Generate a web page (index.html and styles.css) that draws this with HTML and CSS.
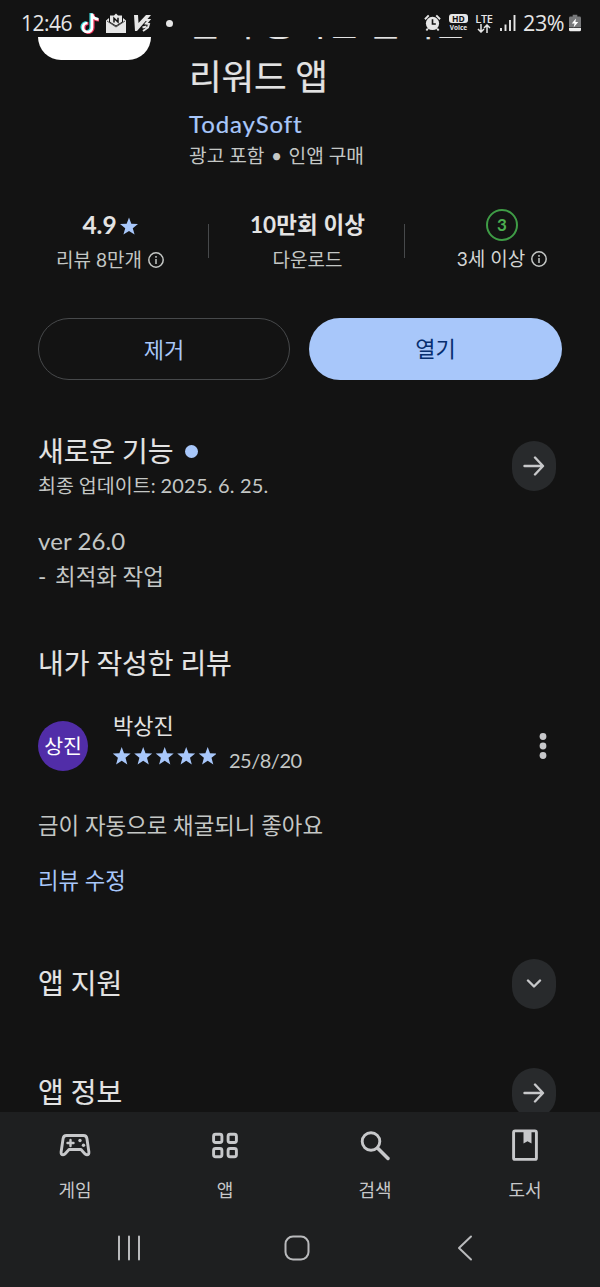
FILE: index.html
```html
<!DOCTYPE html>
<html lang="ko">
<head>
<meta charset="utf-8">
<title>TodaySoft</title>
<link rel="stylesheet" href="styles.css">
</head>
<body>
<div class="screen">
  <header class="status">
    <span class="clock">12:46</span>
    <svg class="tiktok" width="20" height="22" viewBox="0 0 20 22" fill="none" stroke-width="3.2"><path d="M11 1v14a4.500 4.500 0 1 1-4.500-4.500M11 2c.5 3.500 3 5 6.500 5" stroke="#35d6da"/><path d="M13 2v14a4.500 4.500 0 1 1-4.500-4.500M13 3c.5 3.500 3 5 6 5" stroke="#ee3158"/><path d="M12 1.500v14A4.500 4.500 0 1 1 7.500 11M12 2c.5 3.500 3 5 6.500 5.300" stroke="#fff" stroke-width="2.700"/></svg>
    <svg class="mail" width="20" height="20" viewBox="0 0 20 20"><path d="M0 7.500 3 5v4l7 4.500L17 9V5l3 2.500V20H0z" fill="#e6e6e6"/><path d="M4 2.500h4L10 .5l2 2h4v6.200l-6 3.800-6-3.800z" fill="#e6e6e6"/><path d="M8 9.500V5.200l4 3.800V4.700" fill="none" stroke="#131313" stroke-width="1.500"/><path d="m1 8 9 6 9-6" fill="none" stroke="#131313" stroke-width=".7"/></svg>
    <svg class="v3" width="18" height="18" viewBox="0 0 18 18"><path d="M0 1h4l.5 8L12 1h5L3 17H1z" fill="#e6e6e6"/><path d="M9.500 6h5.500l-3 3.500 3 .5-1 3.500-5 3.500M8.500 13.500l4-1" fill="none" stroke="#e6e6e6" stroke-width="2"/></svg>
    <span class="more-dot"></span>
    <span class="spring"></span>
    <svg class="alarm" width="17" height="18" viewBox="0 0 18 18"><circle cx="9" cy="9.500" r="7" fill="#e6e6e6"/><path d="M1 5 5 1M13 1l4 4M4 15l-1.500 2M14 15l1.500 2" stroke="#e6e6e6" stroke-width="2"/><path d="M9 5v5h3.500" fill="none" stroke="#131313" stroke-width="1.700"/></svg>
    <span class="hd"><b>HD</b><i>Voice</i></span>
    <span class="lte"><b>LTE</b><svg width="14" height="9" viewBox="0 0 14 9" fill="none" stroke="#e6e6e6" stroke-width="1.500"><path d="M4 0v8M1 5l3 3 3-3M10 9V1M7 4l3-3 3 3"/></svg></span>
    <svg class="signal" width="16" height="17" viewBox="0 0 16 17" stroke="#e6e6e6" stroke-width="1.900"><path d="M1 13v3M5.500 9.500V16M10 5v11M14.500 0v16"/></svg>
    <span class="percent">23%</span>
    <svg class="battery" width="12" height="18" viewBox="0 0 13 18"><path d="M4 0h5v2h2.500q1.500 0 1.500 1.500V14H0V3.500Q0 2 1.500 2H4z" fill="#77787a"/><path d="M0 14.500h13v2q0 1.500-1.500 1.500h-10Q0 18 0 16.500z" fill="#eee"/><path d="M7.500 4 3 9.500h3L5 14l5-6H7z" fill="#fff"/></svg>
  </header>

  <main class="content">
    <section class="hero">
      <div class="app-icon"></div>
      <div class="hero-text">
        <h1>금이 통하는 돈버는<br>리워드 앱</h1>
        <a class="developer">TodaySoft</a>
        <p class="notice">광고 포함 <span class="bullet">•</span> 인앱 구매</p>
      </div>
    </section>

    <section class="stats">
      <div class="stat">
        <div class="stat-value">4.9<svg class="star-lg" width="18" height="18" viewBox="1.500 1.500 21 20"><path d="m12 1.500 2.700 7.400 7.800.3-6.100 4.900 2.100 7.400-6.500-4.300-6.500 4.300 2.100-7.400L1.500 9.200l7.800-.3z" fill="#a8c7fa"/></svg></div>
        <div class="stat-label">리뷰 8만개<svg class="info" viewBox="0 0 16 16"><circle cx="8" cy="8" r="7.200"/><path d="M8 7v5M8 4v1.700"/></svg></div>
      </div>
      <div class="stat middle">
        <div class="stat-value downloads">10만회 이상</div>
        <div class="stat-label">다운로드</div>
      </div>
      <div class="stat rating">
        <div class="stat-value"><span class="age">3</span></div>
        <div class="stat-label">3세 이상<svg class="info" viewBox="0 0 16 16"><circle cx="8" cy="8" r="7.200"/><path d="M8 7v5M8 4v1.700"/></svg></div>
      </div>
    </section>

    <div class="actions">
      <button class="btn outline">제거</button>
      <button class="btn filled">열기</button>
    </div>

    <section class="whats-new">
      <div class="row">
        <div>
          <h2>새로운 기능<span class="dot"></span></h2>
          <p class="updated">최종 업데이트: <span class="date-num">2025. 6. 25.</span></p>
        </div>
        <span class="round"><svg width="22" height="20" viewBox="0 0 22 20"><path d="M1.500 10h18M12 1.500l8 8.500-8 8.500"/></svg></span>
      </div>
      <p class="notes"><span class="version">ver 26.0</span><br><span class="dash">-</span> 최적화 작업</p>
    </section>

    <section class="my-review">
      <h2>내가 작성한 리뷰</h2>
      <div class="reviewer">
        <span class="avatar">상진</span>
        <div class="who">
          <div class="name">박상진</div>
          <div class="score">
            <svg width="103" height="18" viewBox="0 0 103 18" fill="#a8c7fa"><defs><path id="star" d="m8.700 0 2.300 6.300 6.700.3-5.200 4.200 1.800 6.700-5.600-3.800-5.600 3.800 1.800-6.700L-.3 6.600l6.700-.3z"/></defs><use href="#star"/><use href="#star" x="21.500"/><use href="#star" x="43"/><use href="#star" x="64.500"/><use href="#star" x="86"/></svg>
            <span class="when">25/8/20</span>
          </div>
        </div>
        <svg class="kebab" width="8" height="28" viewBox="0 0 8 28" fill="#c7c8ca"><circle cx="4" cy="4.500" r="3.400"/><circle cx="4" cy="14" r="3.400"/><circle cx="4" cy="23.500" r="3.400"/></svg>
      </div>
      <p class="review-text">금이 자동으로 채굴되니 좋아요</p>
      <a class="edit">리뷰 수정</a>
    </section>

    <section class="row link-row support">
      <h2>앱 지원</h2>
      <span class="round"><svg width="16" height="10" viewBox="0 0 16 10"><path d="m2 1.500 6 6 6-6"/></svg></span>
    </section>
    <section class="row link-row">
      <h2>앱 정보</h2>
      <span class="round"><svg width="22" height="20" viewBox="0 0 22 20"><path d="M1.500 10h18M12 1.500l8 8.500-8 8.500"/></svg></span>
    </section>
  </main>

  <footer class="bottom">
    <nav class="tabs">
      <a class="tab"><svg width="34" height="34" viewBox="0 0 34 34"><path d="M8.500 7.500h17q3 0 3.400 3l2 13.500q.3 2.700-2 2.700-1.300 0-2.300-1.200L23 21.500H11l-3.600 4q-1 1.200-2.300 1.200-2.300 0-2-2.700l2-13.500q.4-3 3.400-3z"/><path d="M12.500 12v6M9.500 15h6" stroke-width="2.400"/><g fill="#c7c8ca" stroke="none"><circle cx="22" cy="12.500" r="1.700"/><circle cx="25.500" cy="17.300" r="1.700"/></g></svg><span>게임</span></a>
      <a class="tab"><svg width="34" height="34" viewBox="0 0 34 34"><rect x="5.600" y="6.200" width="8.300" height="8.300" rx="2"/><rect x="20.100" y="6.200" width="8.300" height="8.300" rx="2"/><rect x="5.600" y="20.500" width="8.300" height="8.300" rx="2"/><rect x="20.100" y="20.500" width="8.300" height="8.300" rx="2"/></svg><span>앱</span></a>
      <a class="tab"><svg width="34" height="34" viewBox="0 0 34 34"><circle cx="13" cy="13.500" r="8.800"/><path d="m19.500 20 10.500 10.500" stroke-width="3.500"/></svg><span>검색</span></a>
      <a class="tab"><svg width="34" height="34" viewBox="0 0 34 34"><rect x="5.600" y="2.900" width="22.800" height="28.500" rx="1.500"/><path d="M15.500 2.500h8v13l-4-2.200-4 2.200z" fill="#c7c8ca" stroke="none"/></svg><span>도서</span></a>
    </nav>
    <div class="system">
      <svg width="24" height="26" viewBox="0 0 24 26"><path d="M2 1.500v23M12 1.500v23M22 1.500v23"/></svg>
      <svg width="26" height="26" viewBox="0 0 26 26"><rect x="1.500" y="1.500" width="23" height="23" rx="7.500"/></svg>
      <svg width="16" height="26" viewBox="0 0 16 26"><path d="M14 1.500 2 13l12 11.500"/></svg>
    </div>
  </footer>
</div>
</body>
</html>
```
FILE: styles.css
```css
* { box-sizing: border-box; margin: 0; padding: 0; }

body {
  background: #131313;
  color: #e3e3e3;
  font-family: Lato, "Noto Sans CJK KR", sans-serif;
  overflow: hidden;
}

svg { display: block; flex: none; }

.screen {
  width: 600px;
  height: 1287px;
  display: flex;
  flex-direction: column;
}

.status {
  height: 37px;
  flex: none;
  display: flex;
  align-items: center;
  padding: 9px 19px 0 21px;
  color: #e6e6e6;
  font-family: "Open Sans", sans-serif;
}
.clock { font-size: 21px; letter-spacing: -0.5px; line-height: 24px; width: 59px; white-space: nowrap; }
.tiktok { margin-right: 6px; }
.mail { margin-right: 8px; }
.v3 { margin-right: 14px; }
.more-dot { width: 7px; height: 7px; border-radius: 50%; background: #e6e6e6; }
.spring { flex: 1; }
.alarm { margin-right: 8px; }
.hd { width: 19px; margin-right: 6px; display: flex; flex-direction: column; align-items: center; }
.hd b { width: 19px; height: 9px; border-radius: 3px; background: #e6e6e6; color: #131313; font-size: 8.5px; line-height: 9px; text-align: center; }
.hd i { font-style: normal; font-weight: 700; font-size: 6.5px; line-height: 8px; margin-top: 1px; }
.lte { width: 20px; margin-right: 6px; display: flex; flex-direction: column; align-items: center; }
.lte b { font-size: 11px; font-weight: 600; line-height: 10px; letter-spacing: -0.3px; }
.signal { margin-right: 7px; }
.percent { font-size: 21.5px; letter-spacing: -0.4px; line-height: 24px; width: 46px; white-space: nowrap; }

.content { flex: 1; min-height: 0; overflow: hidden; }

.hero { display: flex; gap: 38px; padding-left: 38px; height: 158px; }
.app-icon { width: 113px; height: 23px; background: #fff; border-radius: 0 0 24px 24px; }
.hero-text { margin-top: -41px; white-space: nowrap; }
h1 { font-size: 35.5px; font-weight: 400; line-height: 54px; letter-spacing: -0.2px; -webkit-text-stroke: 0.2px #e3e3e3; }
.developer { display: block; color: #a8c7fa; font-size: 24px; line-height: 30px; margin-top: 5px; letter-spacing: 0.9px; -webkit-text-stroke: 0.2px #a8c7fa; }
.notice { font-size: 19.2px; line-height: 30px; color: #c4c7c5; margin-top: 2px; }
.bullet { margin: 0 1.5px; }

.stats { display: grid; grid-template-columns: 196px 196px 196px; padding: 14px 0 0 12px; height: 99px; }
.stat { position: relative; text-align: center; }
.stat + .stat::before { content: ""; position: absolute; left: 0; top: 15px; width: 1px; height: 34px; background: #47494b; }
.stat-value { height: 30px; display: flex; justify-content: center; align-items: center; font-size: 24.5px; font-weight: 700; }
.downloads { font-size: 22.5px; font-weight: 700; letter-spacing: 0.1px; padding-bottom: 2px; }
.middle { padding-left: 3px; }
.star-lg { margin: 3px 0 0 3px; }
.stat-label { height: 30px; margin-top: 4px; display: flex; justify-content: center; align-items: center; gap: 6px; font-size: 19px; color: #c4c7c5; white-space: nowrap; }
.info { width: 16px; height: 16px; margin-top: 3px; fill: none; stroke: #c4c7c5; stroke-width: 1.5; }
.age { width: 32px; height: 32px; margin-top: 2px; border: 2.5px solid #3f9c46; border-radius: 50%; color: #4caf50; font-size: 17px; line-height: 27px; text-align: center; }
.rating .stat-label { margin-top: 3px; color: #d3d5d4; }

.actions { display: flex; gap: 19px; padding-left: 38px; margin-top: 24px; }
.btn { width: 253px; height: 62px; border-radius: 31px; border: 0; font: 22px/62px Lato, "Noto Sans CJK KR", sans-serif; }
.outline { width: 252px; background: none; border: 1.5px solid #47494b; color: #a8c7fa; line-height: 57px; }
.filled { background: #a8c7fa; color: #062e6f; }

.row { display: flex; justify-content: space-between; padding-right: 44px; }
.whats-new { padding-left: 38px; margin-top: 54px; }
h2 { font-size: 28px; font-weight: 400; line-height: 34px; letter-spacing: -0.1px; display: flex; align-items: center; white-space: pre; -webkit-text-stroke: 0.1px #e3e3e3; }
.dot { width: 13px; height: 13px; margin-left: 12px; border-radius: 50%; background: #a8c7fa; }
.updated { font-size: 19.5px; line-height: 34px; color: #c4c7c5; }
.date-num { font-size: 20px; letter-spacing: 0.2px; }
.round { flex: none; width: 44px; height: 50px; border-radius: 22px; background: #282a2c; display: flex; align-items: center; justify-content: center; }
.round svg { fill: none; stroke: #c7c8ca; stroke-width: 2.4; stroke-linecap: round; stroke-linejoin: round; }
.whats-new .round { margin-top: 7px; }
.notes { margin-top: 20px; font-size: 22.4px; line-height: 35px; color: #c4c7c5; }
.version { font-size: 24px; line-height: 35px; letter-spacing: 0.1px; }
.dash { margin-right: 3px; }

.my-review { padding: 0 38px; margin-top: 52px; }
.reviewer { display: flex; align-items: center; height: 60px; margin-top: 36px; }
.avatar { width: 50px; height: 50px; border-radius: 50%; background: #512da8; color: #fff; font-size: 20.5px; line-height: 50px; text-align: center; }
.who { margin: -4px 0 0 25px; flex: 1; align-self: flex-start; }
.name { font-size: 22px; line-height: 28px; margin-bottom: 7px; }
.score { display: flex; gap: 13px; height: 26px; }
.when { font-size: 20px; line-height: 24px; letter-spacing: -0.5px; color: #c4c7c5; padding-top: 1px; }
.kebab { margin-right: 15px; }
.review-text { font-size: 22.4px; line-height: 34px; color: #c4c7c5; margin-top: 33px; }
.edit { display: block; color: #a8c7fa; font-size: 22.3px; line-height: 34px; margin-top: 21px; }

.link-row { padding-left: 38px; align-items: center; height: 50px; margin-top: 59px; }
.link-row h2 { margin-top: -3px; }
.support { margin-top: 61px; }

.bottom { flex: none; height: 175px; background: #1e1f20; color: #c7c8ca; }
.tabs { display: grid; grid-template-columns: repeat(4, 1fr); padding-top: 16px; height: 108px; }
.tab { display: flex; flex-direction: column; align-items: center; gap: 16px; font-size: 18px; line-height: 24px; }
.tab svg { fill: none; stroke: #c7c8ca; stroke-width: 2.9; stroke-linejoin: round; stroke-linecap: round; }
.system { display: grid; grid-template-columns: 168px 168px 168px; padding: 15px 0 0 45px; justify-items: center; }
.system svg { fill: none; stroke: #b9babc; stroke-width: 2; stroke-linecap: round; stroke-linejoin: round; }
```
